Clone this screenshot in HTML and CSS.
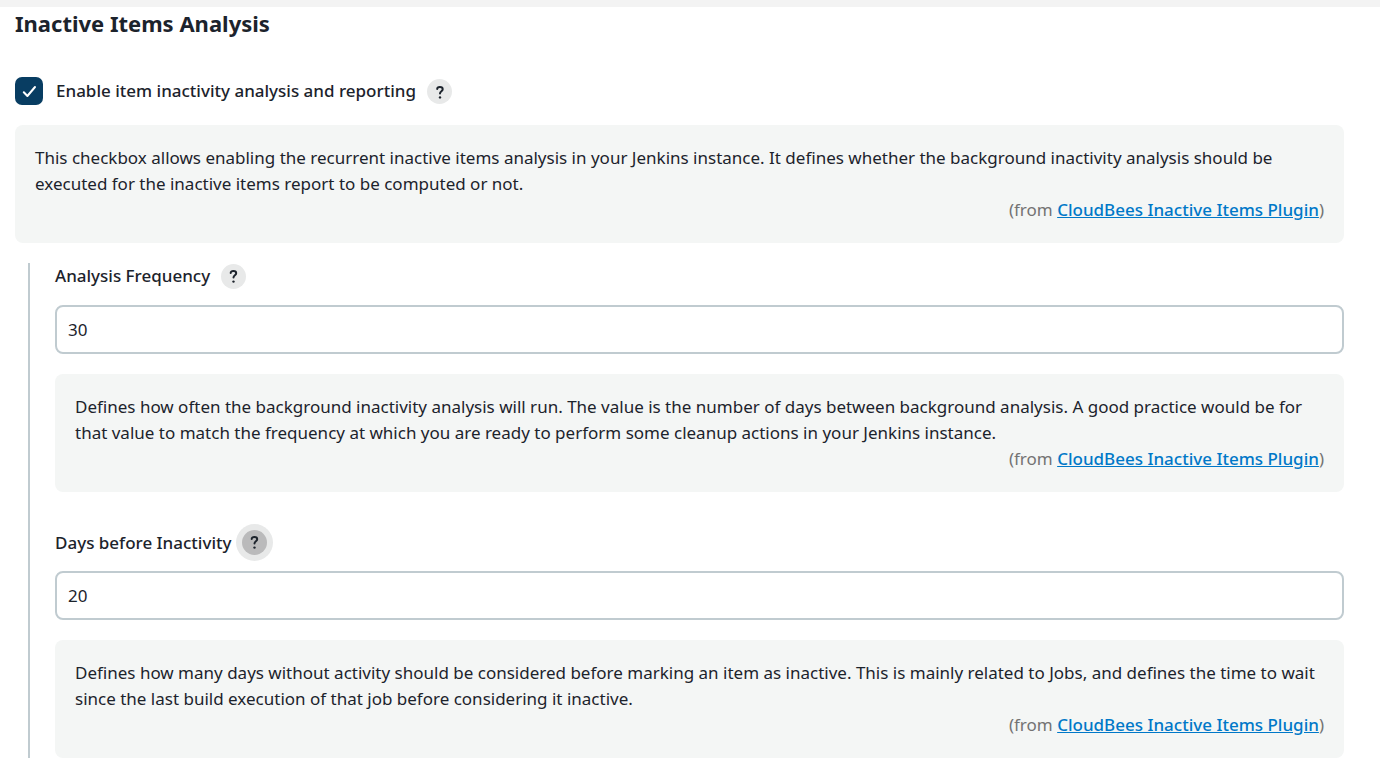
FILE: index.html
```html
<!DOCTYPE html>
<html lang="en">
<head>
<meta charset="utf-8">
<title>Inactive Items Analysis</title>
<link rel="stylesheet" href="styles.css">
</head>
<body>
<main class="page">
<h1 class="title">Inactive Items Analysis</h1>
<div class="check-row">
<label class="check"><input type="checkbox" class="check-input" checked>Enable item inactivity analysis and reporting</label>
<button type="button" class="help" aria-label="Help for inactivity analysis"><svg class="help-icon" viewBox="0 0 25 25"><path d="M10.2 10.1C10.2 8.6 11.2 7.9 12.9 7.9S15.7 8.8 15.7 10.2C15.7 12.2 13 12.2 13 14.5"/><circle cx="13" cy="18.4" r="1.2"/></svg></button>
</div>
<section class="note">
<p class="note-text">This checkbox allows enabling the recurrent inactive items analysis in your Jenkins instance. It defines whether the background inactivity analysis should be executed for the inactive items report to be computed or not.</p>
<p class="source">(from <a href="#">CloudBees Inactive Items Plugin</a>)</p>
</section>
<div class="nested">
<div class="field">
<div class="field-head"><label for="frequency">Analysis Frequency</label>
<button type="button" class="help" aria-label="Help for analysis frequency"><svg class="help-icon" viewBox="0 0 25 25"><path d="M9.7 9.1C9.7 7.6 10.7 6.9 12.4 6.9S15.2 7.8 15.2 9.2C15.2 11.2 12.5 11.2 12.5 13.5"/><circle cx="12.5" cy="17.6" r="1.2"/></svg></button></div>
<input class="text-input" id="frequency" type="text" value="30">
<section class="note">
<p class="note-text">Defines how often the background inactivity analysis will run. The value is the number of days between background analysis. A good practice would be for that value to match the frequency at which you are ready to perform some cleanup actions in your Jenkins instance.</p>
<p class="source">(from <a href="#">CloudBees Inactive Items Plugin</a>)</p>
</section>
</div>
<div class="field">
<div class="field-head"><label for="days">Days before Inactivity</label>
<button type="button" class="help help-active" aria-label="Help for days before inactivity"><svg class="help-icon" viewBox="0 0 25 25"><path d="M9.7 9.1C9.7 7.6 10.7 6.9 12.4 6.9S15.2 7.8 15.2 9.2C15.2 11.2 12.5 11.2 12.5 13.5"/><circle cx="12.5" cy="17.6" r="1.2"/></svg></button></div>
<input class="text-input" id="days" type="text" value="20">
<section class="note">
<p class="note-text">Defines how many days without activity should be considered before marking an item as inactive. This is mainly related to Jobs, and defines the time to wait since the last build execution of that job before considering it inactive.</p>
<p class="source">(from <a href="#">CloudBees Inactive Items Plugin</a>)</p>
</section>
</div>
</div>
</main>
</body>
</html>
```
FILE: styles.css
```css
* { box-sizing: border-box; }
body {
  margin: 0;
  border-top: 7px solid #f3f3f3;
  background: #fff;
  color: #1c232c;
  font: 17px/26px "Noto Sans", sans-serif;
}
.page { padding: 0 36px 23px 15px; }
.title { margin: 0 0 38px; font-size: 22px; line-height: 32px; font-weight: 700; }
.check-row { display: flex; align-items: center; gap: 11px; height: 28px; margin: 0 0 20px; font-weight: 500; }
.check { display: flex; align-items: center; gap: 13px; }
.check-input {
  appearance: none;
  width: 28px;
  height: 28px;
  margin: 0;
  border-radius: 7px;
  background: #083d62 url("data:image/svg+xml,%3Csvg xmlns='http://www.w3.org/2000/svg' viewBox='0 0 28 28'%3E%3Cpath d='M8.8 15.2l3.6 3.8L20 10' fill='none' stroke='white' stroke-width='2' stroke-linecap='round' stroke-linejoin='round'/%3E%3C/svg%3E");
}
.help { width: 25px; height: 25px; padding: 0; border: 0; border-radius: 50%; background: #e8e9e9; color: #1c232c; }
.help-active { background: #bababb; box-shadow: 0 0 0 6px #e8e9e9; }
.help-icon { display: block; width: 25px; height: 25px; }
.help-icon path { fill: none; stroke: currentColor; stroke-width: 2; stroke-linecap: round; }
.help-icon circle { fill: currentColor; }
.note { padding: 20px; border-radius: 8px; background: #f4f6f5; }
.note-text, .source { margin: 0; }
.source { color: #737373; text-align: right; }
.source a { color: #0078c8; font-weight: 500; text-decoration: underline; }
.nested { display: grid; gap: 38px; margin: 20px 0 0 13px; padding-left: 25px; border-left: 2px solid #c0cbd0; }
.field-head { display: flex; align-items: center; gap: 11px; height: 25px; margin-bottom: 16px; font-weight: 500; }
.field:first-child .field-head { height: 26px; }
.text-input {
  display: block;
  width: 100%;
  height: 49px;
  margin-bottom: 20px;
  padding: 0 11px;
  border: 2px solid #c0cbd0;
  border-radius: 8px;
  background: #fff;
  color: #1c232c;
  font: inherit;
}
```
